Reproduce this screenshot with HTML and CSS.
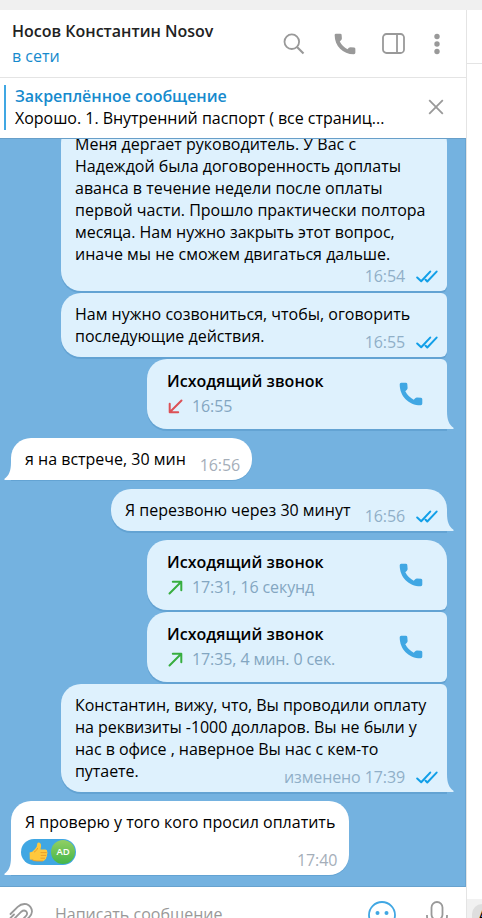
FILE: index.html
```html
<!DOCTYPE html>
<html lang="ru">
<head>
<meta charset="utf-8">
<title>Носов Константин Nosov</title>
<link rel="stylesheet" href="styles.css">
</head>
<body>
<svg class="defs" width="0" height="0">
  <symbol id="phone" viewBox="0 0 24 24"><path d="M2.200 .7H6.800Q8.200 .7 8.300 2L8.600 5.800Q8.700 6.900 7.900 7.700L6.300 9.300Q9.300 15 14.700 17.700L16.200 16.200Q16.900 15.500 18 15.500L22 15.800Q23.300 16 23.300 17.300V21.600Q23.300 23.200 21.700 23.300C9.800 23.400 .7 14.200 .7 2.200Q.7 .7 2.200 .7Z" fill="currentColor"/></symbol>
  <symbol id="checks" viewBox="0 0 22 13"><path d="M1.200 7.500 5.200 11.300 14.200 1.600M9.600 9.800 11.300 11.500 20.600 1.600" fill="none" stroke="currentColor" stroke-width="2" stroke-linecap="round" stroke-linejoin="round"/></symbol>
  <symbol id="arrow" viewBox="0 0 15 15"><path d="M1.500 13.500 13 2M4.800 1.700H13.300V10.200" fill="none" stroke="currentColor" stroke-width="2" stroke-linecap="round" stroke-linejoin="round"/></symbol>
  <symbol id="tail" viewBox="0 0 8 18"><path d="M0 0H1C1 9 3 13.500 7.500 16.800V18H0Z" fill="currentColor"/></symbol>
</svg>
<div class="window">
  <div class="titlebar"></div>
  <div class="content">
    <main class="dialog">
      <header class="header">
        <div class="who"><div class="name">Носов Константин Nosov</div><div class="status">в сети</div></div>
        <svg class="search" width="22" height="22" viewBox="0 0 22 22" fill="none" stroke="currentColor"><circle cx="8.800" cy="8.700" r="7.300" stroke-width="1.800"/><path d="M14 14 20.500 20.500" stroke-width="2.100"/></svg>
        <svg class="call" width="22" height="22"><use href="#phone"/></svg>
        <svg class="panel" width="23" height="21" viewBox="0 0 23 21" fill="none" stroke="currentColor" stroke-width="1.800"><rect x="1" y="1" width="21" height="19" rx="3.500"/><path d="M15 1V20"/></svg>
        <svg class="more" width="6" height="22" viewBox="0 0 6 22" fill="currentColor"><circle cx="3" cy="3.500" r="2.700"/><circle cx="3" cy="11" r="2.700"/><circle cx="3" cy="18.500" r="2.700"/></svg>
      </header>
      <section class="pinned">
        <div class="pin-text"><div class="pin-title">Закреплённое сообщение</div><div>Хорошо. 1. Внутренний паспорт ( все страниц...</div></div>
        <svg width="16" height="16" viewBox="0 0 16 16"><path d="M1.200 1.200 14.800 14.800M14.800 1.200 1.200 14.800" stroke="currentColor" stroke-width="1.800"/></svg>
      </section>
      <section class="chat">
        <article class="bubble out long first">
          <div class="text">Меня дергает руководитель. У Вас с<br>Надеждой была договоренность доплаты<br>аванса в течение недели после оплаты<br>первой части. Прошло практически полтора<br>месяца. Нам нужно закрыть этот вопрос,<br>иначе мы не сможем двигаться дальше.</div>
          <div class="meta">16:54<svg><use href="#checks"/></svg></div>
        </article>
        <article class="bubble out wide joined">
          <div class="text">Нам нужно созвониться, чтобы, оговорить<br>последующие действия.</div>
          <div class="meta">16:55<svg><use href="#checks"/></svg></div>
        </article>
        <article class="bubble out callbox joined last">
          <div class="call-info"><div class="call-title">Исходящий звонок</div><div class="call-time"><svg class="missed"><use href="#arrow"/></svg>16:55</div></div>
          <svg class="call-icon"><use href="#phone"/></svg>
          <svg class="tail"><use href="#tail"/></svg>
        </article>
        <article class="bubble in short">
          <div class="text">я на встрече, 30 мин</div><div class="meta">16:56</div>
          <svg class="tail"><use href="#tail"/></svg>
        </article>
        <article class="bubble out medium last">
          <div class="text">Я перезвоню через 30 минут</div>
          <div class="meta">16:56<svg><use href="#checks"/></svg></div>
          <svg class="tail"><use href="#tail"/></svg>
        </article>
        <article class="bubble out callbox">
          <div class="call-info"><div class="call-title">Исходящий звонок</div><div class="call-time"><svg><use href="#arrow"/></svg>17:31, 16 секунд</div></div>
          <svg class="call-icon"><use href="#phone"/></svg>
        </article>
        <article class="bubble out callbox joined">
          <div class="call-info"><div class="call-title">Исходящий звонок</div><div class="call-time"><svg><use href="#arrow"/></svg>17:35, 4 мин. 0 сек.</div></div>
          <svg class="call-icon"><use href="#phone"/></svg>
        </article>
        <article class="bubble out wide joined last tight">
          <div class="text">Константин, вижу, что, Вы проводили оплату<br>на реквизиты -1000 долларов. Вы не были у<br>нас в офисе , наверное Вы нас с кем-то<br>путаете.</div>
          <div class="meta">изменено 17:39<svg><use href="#checks"/></svg></div>
          <svg class="tail"><use href="#tail"/></svg>
        </article>
        <article class="bubble in reacted">
          <div class="text">Я проверю у того кого просил оплатить
            <div class="reaction">
              <svg width="19" height="20" viewBox="0 0 19 20"><path d="M.6 10.500 3.200 9.700Q6 7.800 7.700 4.800L8.300 1.500Q9 .2 10.700 .8 12.300 1.600 12.100 4L11.500 7.600H16.500Q18.500 7.900 18.200 9.800 19 11 18 12.400 18.600 14 17.300 15.200 17.500 17 15.900 17.700 15.400 19 13.500 19.100H7Q4.500 18.900 3 17.700L.8 17.500Z" fill="#ffc83d"/><path d="M11.500 10.600H17.700M11.700 13.400H17.300M11.500 16.200H16M5 10.200Q8 8.500 8.800 6M2.800 17.500Q5 19 8 19H14" fill="none" stroke="#e99a28" stroke-width=".9"/></svg>
              <span class="avatar">AD</span>
            </div>
          </div>
          <div class="meta">17:40</div>
          <svg class="tail"><use href="#tail"/></svg>
        </article>
      </section>
      <footer class="composer">
        <svg class="clip" width="24" height="27" viewBox="0 0 24 27" fill="none" stroke="currentColor" stroke-width="1.800" stroke-linecap="round"><path d="M1.500 11 8.700 3.800Q12.500 .2 17.500 1.200 22.500 3 23 8.500 22.800 11.500 20.500 13.800L11 23M2.500 18.500 12.300 8.700Q14.800 6.500 17 8.200 19.200 10.500 17 13L7 23M1.500 15 5 11.500"/></svg>
        <span class="placeholder">Написать сообщение</span>
        <svg class="smile" width="28" height="28" viewBox="0 0 28 28"><circle cx="14" cy="14" r="13" fill="none" stroke="currentColor" stroke-width="1.800"/><circle cx="9.500" cy="12" r="2" fill="currentColor"/><circle cx="18.500" cy="12" r="2" fill="currentColor"/><path d="M8 18Q14 23 20 18" fill="none" stroke="currentColor" stroke-width="1.800"/></svg>
        <svg class="mic" width="22" height="28" viewBox="0 0 22 28" fill="none" stroke="currentColor" stroke-width="1.800"><rect x="5.500" y="1" width="11" height="18" rx="5.500"/><path d="M1 14V15Q1 23 11 23 21 23 21 15V14"/></svg>
      </footer>
    </main>
    <aside class="side"><div class="side-head"></div><div class="side-foot"><span class="round">A</span></div></aside>
  </div>
</div>
</body>
</html>
```

FILE: styles.css
```css
* { box-sizing: border-box; }
body { margin: 0; font: 16px/22px "Open Sans", "Noto Sans", sans-serif; color: #000; background: #fff; }
.defs { display: block; position: absolute; }
svg { display: block; flex: none; }
.window { width: 482px; height: 918px; overflow: hidden; display: flex; flex-direction: column; }
.titlebar { height: 10px; flex: none; background: #f0f0f0; }
.content { display: flex; height: 908px; }
.dialog { width: 466px; display: flex; flex-direction: column; }
.header { height: 68px; flex: none; display: flex; align-items: center; padding: 0 26px 0 12px; border-bottom: 1px solid #e4e4e4; color: #999; }
.who { flex: 1; white-space: nowrap; }
.name { font-weight: 600; color: #222; line-height: 25px; margin-top: 1px; }
.status { color: #168acd; line-height: 25px; }
.search { margin-right: 29px; }
.call { margin-right: 26px; }
.panel { margin-right: 29px; }
.pinned { height: 60px; flex: none; display: flex; justify-content: space-between; align-items: center; padding: 0 22px 2px 4px; color: #999; }
.pin-text { height: 45px; padding-left: 9px; border-left: 2px solid #40a7e3; color: #000; white-space: nowrap; letter-spacing: -.03px; }
.pin-title { color: #168acd; font-weight: 600; }
.chat { height: 749px; flex: none; background: #74b2e0; overflow: hidden; display: flex; flex-direction: column; align-items: flex-start; border-top: 1px solid #689fc9; border-bottom: 1px solid #68a2ce; box-shadow: inset -1px 0 #69a5d2; padding: 0 19px 0 11px; }
.bubble { position: relative; display: grid; flex: none; margin-top: 9px; padding: 10px 14px; border-radius: 20px; box-shadow: 0 2px 0 rgba(76, 143, 194, .42); white-space: nowrap; }
.out { align-self: flex-end; background: #def1fd; border-radius: 20px 20px 6px 20px; }
.in { background: #fff; border-radius: 20px 20px 20px 0; box-shadow: 0 1px 0 rgba(76, 143, 194, .42); }
.joined { margin-top: 2px; border-top-right-radius: 6px; }
.last { border-bottom-right-radius: 0; }
.long, .wide { width: 386px; }
.long { padding-bottom: 26px; }
.first { margin-top: -16px; }
.medium { width: 336px; }
.short { width: 241px; }
.callbox { width: 300px; height: 70px; padding: 11px 24px 0 20px; display: flex; justify-content: space-between; }
.reacted { width: 338px; height: 74px; }
.text, .meta { grid-area: 1 / 1; }
.tight .text { letter-spacing: -.05px; }
.meta { display: flex; align-items: center; align-self: end; justify-self: end; margin: 0 -5px -6px 0; color: #90afc8; letter-spacing: -.1px; }
.meta svg { width: 22px; height: 13px; margin-left: 11px; color: #119fe8; }
.long .meta { margin-bottom: -22px; }
.in .meta { color: #a5aeb9; margin-right: -2px; }
.tail { position: absolute; right: -7px; bottom: 0; width: 8px; height: 18px; color: #def1fd; }
.in .tail { right: auto; left: -7px; color: #fff; transform: scaleX(-1); }
.call-title { font-weight: 600; letter-spacing: .04px; }
.call-time { display: flex; align-items: center; color: #83a6c1; line-height: 28px; letter-spacing: -.1px; }
.call-time svg { width: 15px; height: 15px; margin: 0 9px 0 1px; color: #37ae3f; }
.call-time .missed { color: #dc5156; transform: rotate(180deg); }
.call-icon { width: 24px; height: 24px; margin-top: 12px; color: #40a7e3; }
.reaction { display: flex; align-items: center; justify-content: space-between; width: 55px; height: 26px; margin: 6px 0 0 -4px; padding: 0 1px 0 8px; border-radius: 13px; background: #40a7e3; }
.avatar { width: 24px; height: 24px; border-radius: 50%; background: linear-gradient(#91cf63, #45b649); color: #fff; font-size: 9.5px; font-weight: 600; line-height: 24px; text-align: center; }
.composer { display: flex; height: 31px; flex: none; align-items: flex-start; color: #999; overflow: hidden; }
.clip { margin: 16px 0 0 9px; }
.placeholder { width: 169px; white-space: nowrap; margin: 16px 0 0 22px; }
.smile { margin: 14px 0 0 144px; color: #40a7e3; }
.mic { margin: 14px 0 0 30px; }
.side { width: 16px; border-left: 1px solid #e4e4e4; display: flex; flex-direction: column; justify-content: space-between; }
.side-head { height: 54px; border-bottom: 1px solid #e4e4e4; }
.side-foot { height: 19px; padding: 5px 0 0 5px; background: #f1f1f1; overflow: hidden; }
.round { display: block; width: 30px; height: 30px; padding-left: 6px; border-radius: 10px; background: #dedede; line-height: 24px; }
```
